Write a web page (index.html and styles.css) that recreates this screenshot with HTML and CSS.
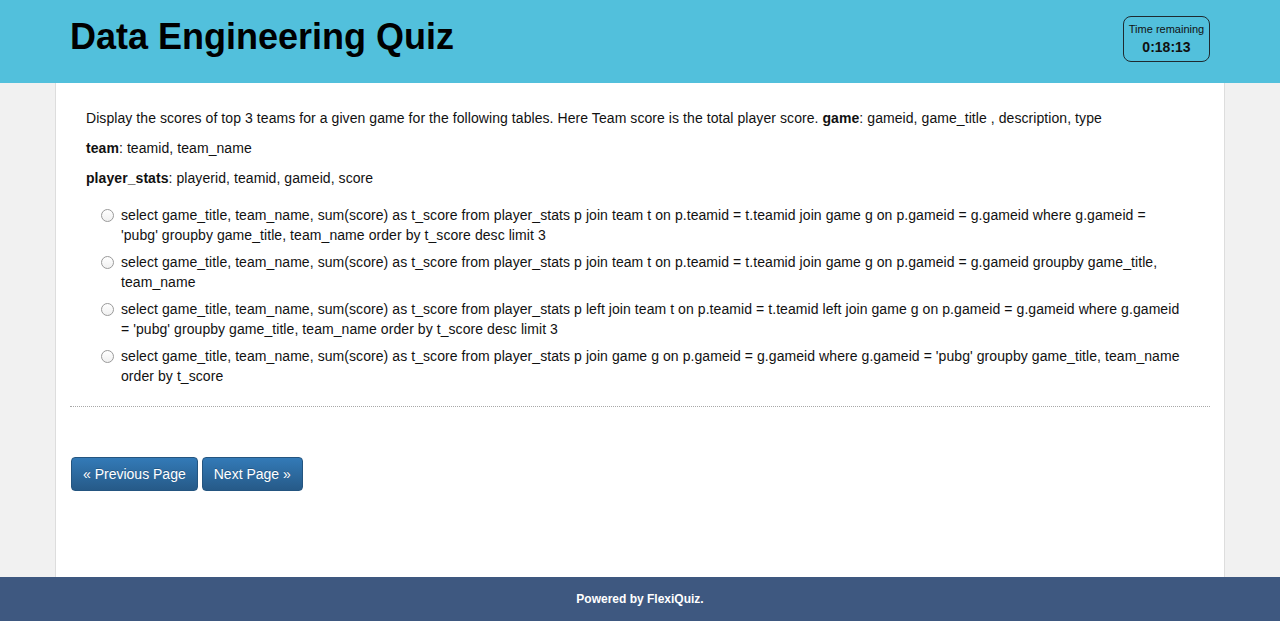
FILE: index.html
```html
<!DOCTYPE html>
<html>
<head>
<meta charset="utf-8">
<title>Data Engineering Quiz</title>
<link rel="stylesheet" href="styles.css">
</head>
<body>
<header class="topbar">
  <div class="topbar-inner">
    <h1 class="quiz-title">Data Engineering Quiz</h1>
    <div class="timer">
      <div class="timer-label">Time remaining</div>
      <div class="timer-value">0:18:13</div>
    </div>
  </div>
</header>
<main class="page">
  <div class="question">
    <p class="q-text">Display the scores of top 3 teams for a given game for the following tables. Here Team score is the total player score. <b>game</b>: gameid, game_title , description, type</p>
    <p class="q-text"><b>team</b>: teamid, team_name</p>
    <p class="q-text"><b>player_stats</b>: playerid, teamid, gameid, score</p>
    <div class="options">
      <label class="option"><span class="radio"></span><span class="opt-text">select game_title, team_name, sum(score) as t_score from player_stats p join team t on p.teamid = t.teamid join game g on p.gameid = g.gameid where g.gameid = 'pubg' groupby game_title, team_name order by t_score desc limit 3</span></label>
      <label class="option"><span class="radio"></span><span class="opt-text">select game_title, team_name, sum(score) as t_score from player_stats p join team t on p.teamid = t.teamid join game g on p.gameid = g.gameid groupby game_title, team_name</span></label>
      <label class="option"><span class="radio"></span><span class="opt-text">select game_title, team_name, sum(score) as t_score from player_stats p left join team t on p.teamid = t.teamid left join game g on p.gameid = g.gameid where g.gameid = 'pubg' groupby game_title, team_name order by t_score desc limit 3</span></label>
      <label class="option"><span class="radio"></span><span class="opt-text">select game_title, team_name, sum(score) as t_score from player_stats p join game g on p.gameid = g.gameid where g.gameid = 'pubg' groupby game_title, team_name order by t_score</span></label>
    </div>
  </div>
  <hr class="divider">
  <div class="nav">
    <button class="btn">« Previous Page</button>
    <button class="btn">Next Page »</button>
  </div>
</main>
<footer class="footer">Powered by FlexiQuiz.</footer>
</body>
</html>
```
FILE: styles.css
```css
* { box-sizing: border-box; }
html, body { margin: 0; padding: 0; }
body {
  font-family: "Liberation Sans", Arial, sans-serif;
  font-size: 14px;
  color: #111;
  background: #f1f1f1;
  min-height: 100vh;
  display: flex;
  flex-direction: column;
}
.topbar {
  background: #52c0dc;
  height: 83px;
}
.topbar-inner {
  width: 1140px;
  margin: 0 auto;
  display: flex;
  justify-content: space-between;
  align-items: flex-start;
}
.quiz-title {
  margin: 19px 0 0;
  font-size: 36px;
  line-height: 36px;
  font-weight: bold;
  color: #000;
}
.timer {
  margin-top: 16px;
  width: 87px;
  height: 46px;
  border: 1px solid #1e2a30;
  border-radius: 8px;
  text-align: center;
  color: #111;
  padding-top: 5px;
}
.timer-label {
  font-size: 11px;
  line-height: 14px;
}
.timer-value {
  font-size: 14px;
  font-weight: bold;
  line-height: 18px;
  margin-top: 2px;
}
.page {
  flex: 1;
  width: 1170px;
  margin: 0 auto;
  background: #fff;
  border-left: 1px solid #ddd;
  border-right: 1px solid #ddd;
  padding: 25px 14px 0;
}
.question {
  padding: 0 16px;
  letter-spacing: 0.07px;
}
.q-text {
  margin: 0 0 10px;
  line-height: 20px;
}
.options {
  padding: 7px 14px 0 15px;
}
.option {
  display: flex;
  align-items: flex-start;
  line-height: 20px;
  margin-bottom: 7px;
  cursor: pointer;
}
.radio {
  flex: none;
  width: 13px;
  height: 13px;
  border: 1px solid #9a9a9a;
  border-radius: 50%;
  background: linear-gradient(#fff, #f0f0f0);
  margin: 4px 7px 0 0;
}
.divider {
  margin: 20px 0 0;
  border: 0;
  border-top: 1px dotted #a8a8a8;
  height: 0;
}
.nav {
  display: flex;
  gap: 4px;
  margin-top: 50px;
  padding-left: 1px;
}
.btn {
  font-family: "Liberation Sans", Arial, sans-serif;
  font-size: 14px;
  color: #fff;
  height: 34px;
  padding: 0 11px;
  border: 1px solid #245580;
  border-radius: 4px;
  background: linear-gradient(#337ab7, #265a88);
  text-shadow: 0 -1px 0 rgba(0,0,0,0.2);
  cursor: pointer;
}
.footer {
  height: 44px;
  background: #3e5880;
  color: #fff;
  font-size: 12px;
  font-weight: bold;
  text-align: center;
  line-height: 44px;
}
```
